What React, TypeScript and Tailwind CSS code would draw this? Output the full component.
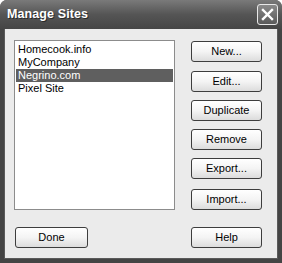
import React from "react";

const sites = ["Homecook.info", "MyCompany", "Negrino.com", "Pixel Site"];

function XpButton({ label, className = "" }: { label: string; className?: string }) {
  return (
    <button
      className={`w-[71px] h-[21px] rounded-[3px] border border-[#3d3d3d] bg-gradient-to-b from-[#ffffff] via-[#f4f4f4] to-[#dcdcdc] text-[11px] text-black leading-none ${className}`}
    >
      {label}
    </button>
  );
}

export default function App() {
  const selected = "Negrino.com";

  return (
    <div className="w-[282px] h-[263px] bg-white" style={{ fontFamily: '"Liberation Sans", Arial, sans-serif' }}>
      <div className="w-full h-full flex flex-col rounded-t-[7px] bg-[#444444] overflow-hidden">
        {/* Title bar */}
        <div className="h-[29px] flex items-center justify-between pl-[7px] pr-[4px] bg-gradient-to-b from-[#7a7a7a] via-[#555555] to-[#454545]">
          <span className="text-white font-bold text-[12.5px] tracking-[0.1px] [text-shadow:1px_1px_0_#2a2a2a]">
            Manage Sites
          </span>
          <div className="w-[21px] h-[21px] rounded-[3px] border border-[#e8e8e8] bg-gradient-to-b from-[#8a8a8a] to-[#5a5a5a] flex items-center justify-center">
            <svg width="13" height="13" viewBox="0 0 13 13">
              <path d="M2 2 L11 11 M11 2 L2 11" stroke="#ffffff" strokeWidth="2.4" strokeLinecap="square" />
            </svg>
          </div>
        </div>

        {/* Client area */}
        <div className="flex-1 mx-[4px] mb-[4px] bg-[#ebebeb] flex border-l border-r border-b border-[#5a5a5a]">
          <div className="flex flex-col pl-[9px] pt-[11px]">
            <div className="w-[161px] h-[170px] bg-white border border-[#8c8c8c] pt-[2px] px-px">
              {sites.map((s) => (
                <div
                  key={s}
                  className={`h-[13px] leading-[13px] text-[11px] pl-[2px] ${
                    s === selected ? "bg-[#5f5f5f] text-white" : "text-black"
                  }`}
                >
                  {s}
                </div>
              ))}
            </div>
            <XpButton label="Done" className="mt-[17px] ml-px w-[73px]" />
          </div>

          <div className="flex flex-col pl-[16px] pt-[12px]">
            <XpButton label="New..." />
            <XpButton label="Edit..." className="mt-[9px]" />
            <XpButton label="Duplicate" className="mt-[8px]" />
            <XpButton label="Remove" className="mt-[8px]" />
            <XpButton label="Export..." className="mt-[8px]" />
            <XpButton label="Import..." className="mt-[10px]" />
            <XpButton label="Help" className="mt-[17px]" />
          </div>
        </div>
      </div>
    </div>
  );
}
